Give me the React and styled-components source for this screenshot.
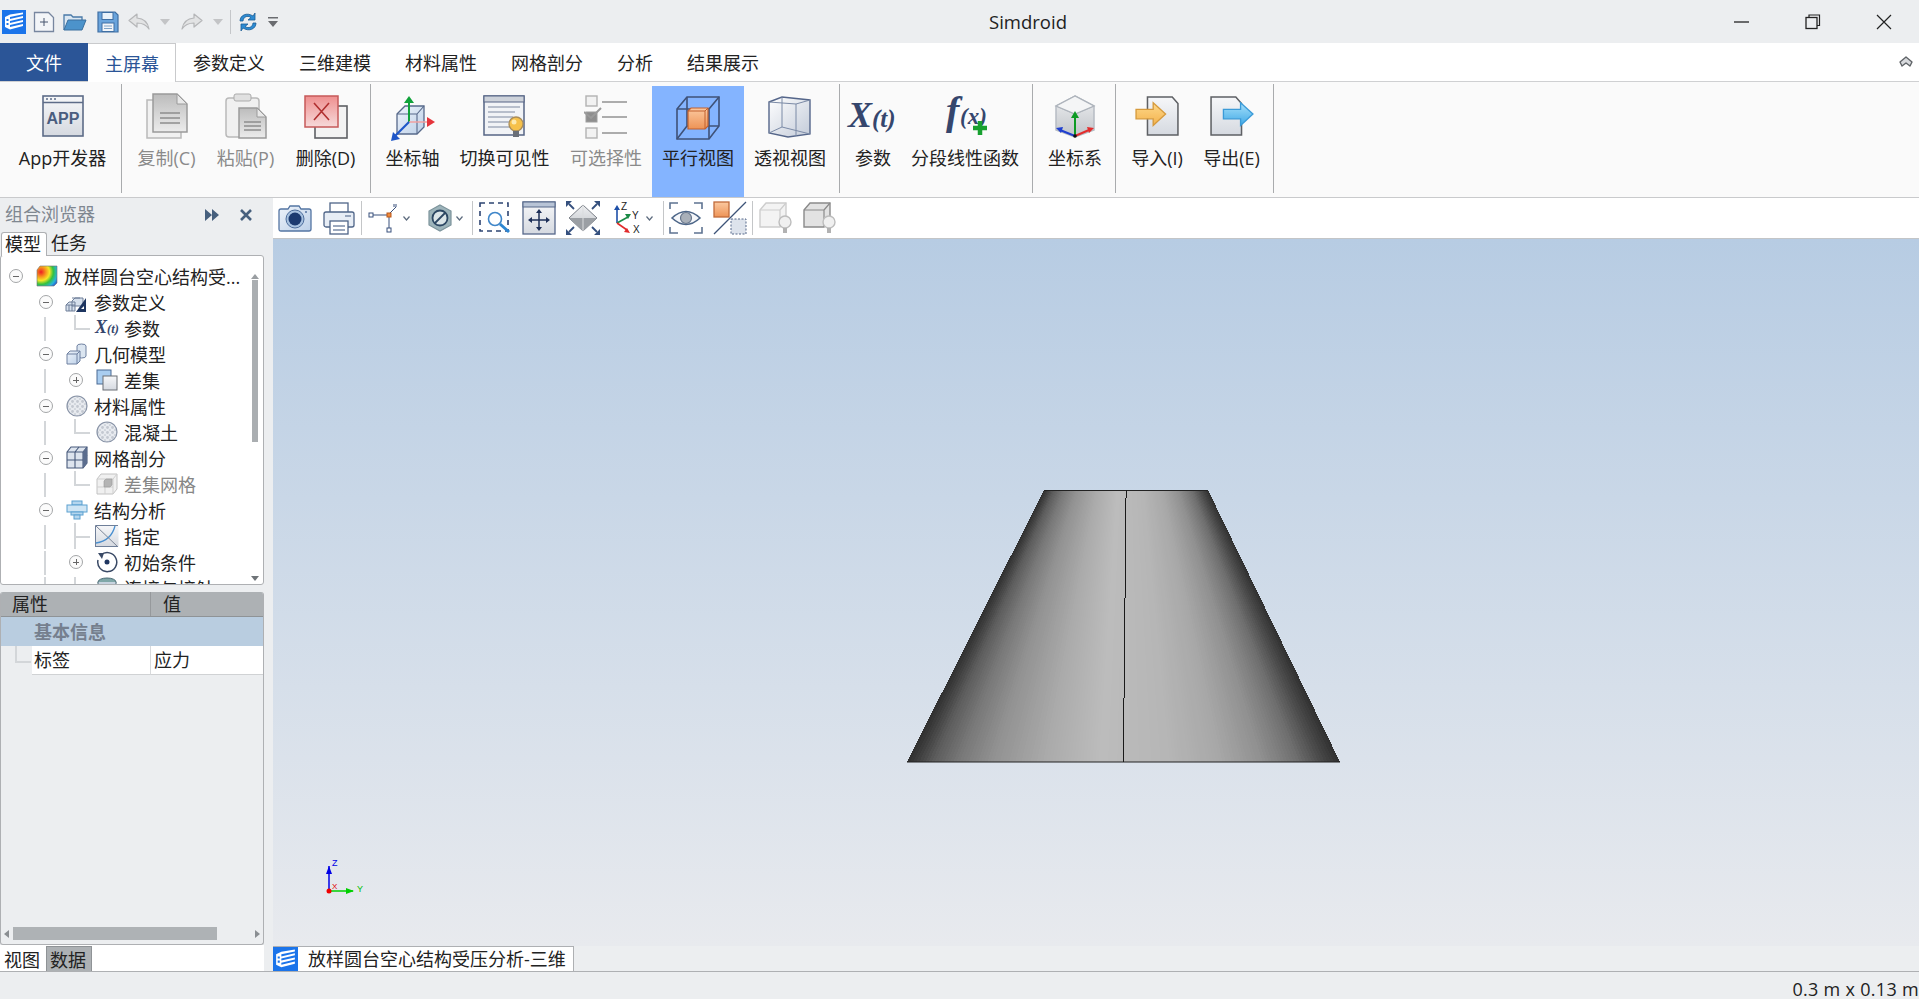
import React from 'react';
import styled, { createGlobalStyle, css } from 'styled-components';

const Global = createGlobalStyle`
  html, body { margin: 0; padding: 0; background: #eceef0; overflow: hidden; }
  * { box-sizing: border-box; }
  body { font-family: "Open Sans", "Noto Sans CJK SC", sans-serif; color: #222; }
`;

const Root = styled.div`
  width: 1919px; height: 999px; display: flex; flex-direction: column; overflow: hidden; background: #eceef0;
`;
const HiddenDefs = styled.svg`display: block; width: 0; height: 0;`;

/* title bar */
const TitleBar = styled.div`height: 43px; display: flex; align-items: center; background: #eceef0; flex: none;`;
const Qat = styled.div`display: flex; align-items: center; width: 280px; flex: none; padding-left: 2px;`;
const QatItem = styled.div`display: flex; margin-right: ${p => p.$mr || 0}px;`;
const QatSep = styled.div`width: 1px; height: 24px; background: #c4c6c9; margin-right: 7px;`;
const Title = styled.div`flex: 1; text-align: center; padding-left: 70px; font-size: 18.5px; line-height: 45px; color: #222;`;
const WinControls = styled.div`display: flex; flex: none;`;
const WinButton = styled.div`width: 71px; height: 43px; display: flex; align-items: center; justify-content: center;`;

/* menu */
const MenuBar = styled.div`height: 39px; flex: none; display: flex; background: #fff; border-bottom: 1px solid #cfd0d2;`;
const FileTab = styled.div`width: 88px; height: 38px; background: #2b5597; color: #fff; font-size: 18px; line-height: 40px; text-align: center;`;
const MenuTab = styled.div`
  height: ${p => p.$active ? 39 : 38}px; padding: 0 17px; font-size: 18px; line-height: 40px; white-space: nowrap; color: ${p => p.$active ? '#2b5597' : '#222'};
  ${p => p.$active && css`background: #fff; border: 1px solid #c9cacc; border-bottom: none; border-left: none; width: 88px; padding: 0 0 0 17px;`}
`;
const MenuSpacer = styled.div`flex: 1;`;
const Collapse = styled.div`width: 20px; display: flex; align-items: center; justify-content: flex-start;`;

/* ribbon */
const Ribbon = styled.div`height: 116px; flex: none; display: flex; padding-left: 2px; background: #fafafa; border-bottom: 1px solid #c9cacc;`;
const RibbonGroup = styled.div`
  display: flex; align-items: flex-start; height: 109px; margin-top: 2px; padding: 0 ${p => p.$pr || 3}px 0 5px; border-right: 1px solid #a9abad;
`;
const RibbonButton = styled.div`
  width: ${p => p.$w}px; height: 111px; margin-top: 2px; padding-top: 10px; display: flex; flex-direction: column; align-items: center; flex: none;
  background: ${p => p.$active ? '#84b4ff' : 'transparent'};
`;
const RibbonIcon = styled.div`height: 49px; display: flex; align-items: flex-start; justify-content: center;`;
const RibbonLabel = styled.div`
  font-size: 18px; line-height: 26px; white-space: nowrap; color: ${p => p.$disabled ? '#8a8a8a' : '#222'};
`;

/* main */
const Main = styled.div`flex: 1; display: flex; min-height: 0;`;
const LeftPanel = styled.div`width: 264px; flex: none; margin-right: 9px; display: flex; flex-direction: column;`;
const DockHeader = styled.div`height: 34px; flex: none; display: flex; align-items: center; padding-left: 5px; font-size: 18px; color: #7f8790;`;
const DockTitle = styled.div`flex: 1; line-height: 30px; margin-bottom: 2px;`;
const DockAction = styled.div`display: flex; margin-right: ${p => p.$mr}px;`;
const TabRow = styled.div`height: 23px; flex: none; display: flex; font-size: 18px; line-height: 23px; position: relative; z-index: 1;`;
const ModelTab = styled.div`
  height: ${p => p.$active ? 24 : 23}px; width: ${p => p.$active ? 46 : 42}px; padding-left: ${p => p.$active ? 3 : 4}px; margin-left: ${p => p.$active ? 1 : 0}px;
  ${p => p.$active && css`background: #fff; border: 1px solid #aeb0b3; border-bottom: none; border-radius: 3px 3px 0 0;`}
`;
const TreeBox = styled.div`height: 330px; flex: none; display: flex; background: #fff; border: 1px solid #aeb0b3; border-radius: 3px; overflow: hidden;`;
const TreeList = styled.div`flex: 1; padding-top: 7px; overflow: hidden; min-width: 0;`;
const Row = styled.div`display: flex; align-items: center; height: 26px; font-size: 18px; white-space: nowrap; color: ${p => p.$disabled ? '#868686' : '#222'};`;
const guide = '#d3d6d9';
const Cell = styled.div`
  width: 30px; height: 26px; flex: none; display: flex; align-items: center; justify-content: center; padding-right: 0;
  background-repeat: no-repeat;
  ${p => p.$kind === 'v' && css`
    background-image: linear-gradient(${guide}, ${guide});
    background-size: 2px 24px; background-position: 13px 2px;
  `}
  ${p => p.$kind === 'elbow' && css`
    background-image: linear-gradient(${guide}, ${guide}), linear-gradient(${guide}, ${guide});
    background-size: 2px 14px, 16px 2px; background-position: 13px 0, 13px 13px;
  `}
  ${p => p.$kind === 'tee' && css`
    background-image: linear-gradient(${guide}, ${guide}), linear-gradient(${guide}, ${guide});
    background-size: 2px 26px, 16px 2px; background-position: 13px 0, 13px 13px;
  `}
`;
const Toggle = styled.div`
  width: 14px; height: 14px; border-radius: 50%; border: 1px solid #a4a6a8; background-color: #fbfbfb; background-repeat: no-repeat;
  background-image: linear-gradient(#666, #666) ${p => p.$plus ? ', linear-gradient(#666, #666)' : ''};
  background-size: 6px 1px ${p => p.$plus ? ', 1px 6px' : ''};
  background-position: center ${p => p.$plus ? ', center' : ''};
`;
const NodeIcon = styled.div`width: 24px; height: 24px; flex: none; margin: 0 5px 0 4px; display: flex; align-items: center; justify-content: center;`;
const TreeScroll = styled.div`width: 11px; margin-right: 3px; flex: none; display: flex; flex-direction: column; align-items: center; padding: 18px 0 3px;`;
const ArrowUp = styled.div`width: 0; height: 0; border-left: 4px solid transparent; border-right: 4px solid transparent; border-bottom: 5px solid #9a9ea2;`;
const ArrowDown = styled.div`width: 0; height: 0; border-left: 4px solid transparent; border-right: 4px solid transparent; border-top: 5px solid #6f7478; margin-top: auto;`;
const VThumb = styled.div`width: 6px; height: 162px; background: #aaaeb1; margin-top: 1px;`;

const PropPanel = styled.div`
  height: 353px; margin-top: 7px; flex: none; display: flex; flex-direction: column; background: #eceef0;
  border: 1px solid #aeb0b3; border-top: none; border-radius: 3px; overflow: hidden;
`;
const PropHead = styled.div`height: 25px; flex: none; display: flex; background: #adb1b4; border-bottom: 1px solid #8f9396; font-size: 18px; line-height: 25px;`;
const PropHeadCell = styled.div`padding-left: ${p => p.$pl}px; width: ${p => p.$w ? p.$w + 'px' : 'auto'}; flex: ${p => p.$w ? 'none' : 1}; ${p => p.$w && 'border-right: 1px solid #96999c;'}`;
const PropSection = styled.div`height: 29px; flex: none; background: #b9cde0; padding-left: 33px; font-size: 18px; font-weight: 700; line-height: 31px; color: #757f8e;`;
const PropRow = styled.div`height: 29px; flex: none; display: flex; font-size: 18px; line-height: 29px;`;
const PropGutter = styled.div`
  width: 31px; flex: none; background: no-repeat linear-gradient(${guide}, ${guide}) 14px 0 / 2px 15px, no-repeat linear-gradient(${guide}, ${guide}) 14px 15px / 16px 2px;
`;
const PropLabel = styled.div`width: 119px; flex: none; background: #fff; padding-left: 2px; border-bottom: 1px solid #d0d2d4; border-right: 1px solid #d8dadc;`;
const PropValue = styled.div`flex: 1; background: #fff; padding-left: 3px; border-bottom: 1px solid #d0d2d4;`;
const PropFill = styled.div`flex: 1;`;
const HScroll = styled.div`height: 13px; margin-bottom: 4px; flex: none; display: flex; align-items: center; padding: 0 3px;`;
const ArrowLeft = styled.div`width: 0; height: 0; border-top: 4px solid transparent; border-bottom: 4px solid transparent; border-right: 5px solid #8a8e92;`;
const ArrowRight = styled.div`width: 0; height: 0; border-top: 4px solid transparent; border-bottom: 4px solid transparent; border-left: 5px solid #8a8e92; margin-left: auto;`;
const HThumb = styled.div`width: 204px; height: 13px; background: #aeb2b5; margin-left: 4px;`;
const BottomTabs = styled.div`flex: 1; display: flex; align-items: flex-end; background: #fff; font-size: 18px;`;
const BottomTab = styled.div`
  width: 46px; height: 25px; line-height: 23px; padding: 3px 0 0 4px;
  ${p => p.$active && css`background: #adb1b4; border: 1px solid #8f9396; border-bottom: none; padding: 2px 0 0 3px;`}
`;

const RightPane = styled.div`flex: 1; min-width: 0; display: flex; flex-direction: column;`;
const Toolbar = styled.div`height: 41px; flex: none; display: flex; align-items: center; background: #fff; border-bottom: 1px solid #c3c5c7;`;
const ToolBtn = styled.div`width: 44px; height: 40px; flex: none; display: flex; align-items: center; justify-content: center;`;
const DropBtn = styled.div`height: 40px; flex: none; display: flex; align-items: center; padding: 0 ${p => p.$pr}px 0 ${p => p.$pl}px; gap: ${p => p.$gap}px;`;
const ToolSep = styled.div`width: 1px; height: 34px; background: #c4c6c8; flex: none;`;
const Viewport = styled.div`flex: 1; position: relative; background: linear-gradient(#b7cce3, #e8eaee); min-height: 0;`;
const Model = styled.svg`position: absolute; left: 634px; top: 251px;`;
const Triad = styled.svg`position: absolute; left: 40px; top: 615px;`;
const DocTabs = styled.div`height: 25px; flex: none; display: flex; background: #eceef0;`;
const DocTab = styled.div`
  width: 301px; display: flex; align-items: center; background: #fff; border: 1px solid #aeb0b3; border-bottom: none; border-left: none; font-size: 18px; white-space: nowrap;
`;
const DocLabel = styled.div`margin-left: 10px; line-height: 26px;`;
const StatusBar = styled.div`height: 28px; flex: none; display: flex; justify-content: flex-end; background: #eceef0; border-top: 1px solid #aeb0b3; font-size: 18px; letter-spacing: .3px; line-height: 35px; color: #222; white-space: nowrap;`;

/* ---------- drawings ---------- */
const Logo = ({ s = 24 }) => (
  <svg width={s} height={s} viewBox="0 0 24 24">
    <rect width="24" height="24" fill="#1b74ea" />
    <path d="M3 7l5-2.5 13-2v1.800L8 7v2l13-3v2L8 11v2l13-3v2L8 15v2l13-3v2L8 19.500 3 17z" fill="#fff" />
    <path d="M4.500 9h2v2h-2zM4.500 13h2v2h-2z" fill="#1b74ea" />
  </svg>
);
const NewIco = () => (
  <svg width="22" height="22" viewBox="0 0 22 22">
    <path d="M1.500 1.500h14l5 5v14h-19z" fill="#f3f5f8" stroke="#77869f" strokeWidth="1.300" />
    <path d="M11 7v8M7 11h8" stroke="#46546e" strokeWidth="1" />
  </svg>
);
const OpenIco = () => (
  <svg width="24" height="20" viewBox="0 0 24 20">
    <path d="M1 18V3h7l2 2h9v3" fill="#dbe7f2" stroke="#4a7aa8" strokeWidth="1.300" />
    <path d="M1 18l4-10h18l-4 10z" fill="#4c93cb" stroke="#3a6f9e" strokeWidth="1" />
  </svg>
);
const SaveIco = () => (
  <svg width="22" height="22" viewBox="0 0 22 22">
    <path d="M1 1h17l3 3v17H1z" fill="#6aa4dc" stroke="#3f6fa3" strokeWidth="1.200" />
    <rect x="5" y="1.500" width="11" height="7" fill="#eaf2fa" stroke="#3f6fa3" />
    <rect x="5" y="12" width="12" height="8.500" fill="#f2f5f9" stroke="#3f6fa3" />
    <path d="M7 15h8M7 17.500h8" stroke="#7ea2c6" />
  </svg>
);
const UndoIco = ({ flip }) => (
  <svg width="23" height="18" viewBox="0 0 23 18" style={flip ? { transform: 'scaleX(-1)' } : undefined}>
    <path d="M9 1L1 7.500 9 14v-4c5 0 9 1.500 12 6-1-6-5-10.500-12-11z" fill="#e2e3e4" stroke="#b5b6b8" strokeWidth="1.200" strokeLinejoin="round" />
  </svg>
);
const TinyDown = () => (
  <svg width="10" height="6" viewBox="0 0 10 6"><path d="M0 0h10L5 6z" fill="#c3c4c6" /></svg>
);
const RefreshIco = () => (
  <svg width="20" height="22" viewBox="0 0 20 22">
    <path d="M2 10C2 4 9 1 15 5l2-3v7h-7l3-2.500C9 4 5.500 6 5 10z" fill="#2d8bd2" stroke="#1c5d94" strokeWidth=".8" />
    <path d="M18 12c0 6-7 9-13 5l-2 3v-7h7l-3 2.500c4 2.500 7.500.5 8-3.500z" fill="#2d8bd2" stroke="#1c5d94" strokeWidth=".8" />
  </svg>
);
const QatMore = () => (
  <svg width="10" height="10" viewBox="0 0 10 10"><path d="M0 0h10v1.500H0zM0 4h10L5 10z" fill="#6a6c70" /></svg>
);

const DocPath = ({ x, y, w, h, f = 8 }) => `M${x} ${y}h${w - f}l${f} ${f}v${h - f}h-${w}z`;

const AppIco = () => (
  <svg width="42" height="42" viewBox="0 0 42 42" style={{ marginTop: -1 }}>
    <rect x="1" y="1" width="40" height="40" fill="url(#gPage)" stroke="#5d6c88" strokeWidth="1.600" />
    <path d="M1 7.500h40" stroke="#5d6c88" strokeWidth="1.300" />
    <path d="M4 4h2M8 4h2M12 4h2" stroke="#5d6c88" strokeWidth="1.300" />
    <text x="21" y="29" textAnchor="middle" fontFamily="Liberation Sans, sans-serif" fontWeight="700" fontSize="16" fill="#4a5d7f">APP</text>
  </svg>
);
const CopyIco = () => (
  <svg width="42" height="46" viewBox="0 0 42 46" style={{ marginTop: -3 }}>
    <rect x="1" y="7" width="34" height="38" fill="#f1f1f1" stroke="#b9b9b9" strokeWidth="1.500" />
    <path d={DocPath({ x: 7, y: 1, w: 34, h: 38, f: 10 })} fill="url(#gGray)" stroke="#9a9a9a" strokeWidth="1.500" />
    <path d="M31 1v10h10z" fill="#e8e8e8" stroke="#9a9a9a" />
    <path d="M14 20h20M14 25h20M14 30h20" stroke="#8d8d8d" strokeWidth="1.500" />
  </svg>
);
const PasteIco = () => (
  <svg width="42" height="46" viewBox="0 0 42 46" style={{ marginTop: -3 }}>
    <rect x="1" y="5" width="33" height="39" rx="3" fill="#f0f0f0" stroke="#b9b9b9" strokeWidth="1.500" />
    <rect x="9" y="1" width="17" height="7" rx="2" fill="#e0e0e0" stroke="#ababab" />
    <path d={DocPath({ x: 14, y: 15, w: 27, h: 30, f: 9 })} fill="url(#gGray)" stroke="#9a9a9a" strokeWidth="1.500" />
    <path d="M32 15v9h9z" fill="#e8e8e8" stroke="#9a9a9a" />
    <path d="M19 29h17M19 33h17M19 37h17" stroke="#8d8d8d" strokeWidth="1.400" />
  </svg>
);
const DeleteIco = () => (
  <svg width="44" height="44" viewBox="0 0 44 44" style={{ marginTop: -1 }}>
    <rect x="11" y="11" width="32" height="32" fill="#f3f3f3" stroke="#5e6064" strokeWidth="1.600" />
    <rect x="1" y="1" width="33" height="31" fill="url(#gRed)" stroke="#c65a5a" strokeWidth="1.500" />
    <path d="M10 8l15 17M25 8L10 25" stroke="#b02f2f" strokeWidth="1.600" />
  </svg>
);
const AxisIco = () => (
  <svg width="46" height="48" viewBox="0 0 46 48" style={{ marginTop: -2 }}>
    <path d="M7 20l8-8h19v21l-7 7H7z" fill="url(#gBlueLight)" stroke="#57698a" strokeWidth="1.300" />
    <path d="M7 20h20v20M27 20l7-8" fill="none" stroke="#57698a" strokeWidth="1.100" />
    <path d="M19 28V6" stroke="#10a23a" strokeWidth="2" />
    <path d="M14 9l5-7 5 7z" fill="#10a23a" />
    <path d="M19 28h20" stroke="#f0a0a0" strokeWidth="1.500" />
    <path d="M37 23l8 5-8 5z" fill="#e5343b" />
    <path d="M19 28L5 42" stroke="#1f57c8" strokeWidth="2.200" />
    <path d="M1 47l2-9 7 7z" fill="#1f57c8" />
  </svg>
);
const VisIco = () => (
  <svg width="44" height="44" viewBox="0 0 44 44" style={{ marginTop: -1 }}>
    <rect x="1" y="1" width="40" height="39" fill="#f1f3f6" stroke="#566585" strokeWidth="1.500" />
    <rect x="1" y="1" width="40" height="6" fill="#cdd2da" stroke="#566585" strokeWidth="1" />
    <path d="M5 12h32M5 17h27M5 22h25M5 27h22M5 32h22" stroke="#7f8aa0" strokeWidth="1.200" />
    <circle cx="33" cy="29" r="7" fill="#f6c14a" stroke="#a88c5a" strokeWidth="1.300" />
    <circle cx="31" cy="27" r="2.500" fill="#fdeab0" />
    <rect x="30" y="36" width="6" height="6" fill="#6a6f78" />
  </svg>
);
const SelectIco = () => (
  <svg width="44" height="44" viewBox="0 0 44 44" style={{ marginTop: -1 }}>
    <rect x="2" y="1" width="11" height="10" fill="#f2f2f2" stroke="#b2b2b2" strokeWidth="1.400" />
    <rect x="2" y="17" width="11" height="10" fill="#8e8e8e" stroke="#9e9e9e" />
    <path d="M0 17l7 6 10-10" fill="none" stroke="#9a9a9a" strokeWidth="2" />
    <rect x="2" y="33" width="11" height="10" fill="#f2f2f2" stroke="#b2b2b2" strokeWidth="1.400" />
    <path d="M18 7h25M18 22h25M18 38h25" stroke="#acacac" strokeWidth="1.800" />
  </svg>
);
const ParallelIco = () => (
  <svg width="44" height="46" viewBox="0 0 44 46" style={{ marginTop: -2 }}>
    <g fill="none" stroke="#3f5278" strokeWidth="1.600">
      <path d="M1 15L11 3h32v29L33 45H1z" />
      <path d="M1 15h32v30M33 15L43 3M11 3v29h32M11 32L1 45" />
    </g>
    <path d="M12 17l3-3h17v18l-3 3H12z" fill="url(#gOrange)" stroke="#c2602e" strokeWidth="1.200" />
    <path d="M12 17h17v18M29 17l3-3" fill="none" stroke="#c2602e" />
  </svg>
);
const PerspIco = () => (
  <svg width="44" height="44" viewBox="0 0 44 44" style={{ marginTop: -1 }}>
    <path d="M1 7l13-5 28 3v34l-22 3-19-4z" fill="url(#gGlass)" stroke="#55668a" strokeWidth="1.400" />
    <path d="M1 7l27 2 14-4M28 9v32M14 2v30L1 38M14 32l28 7" fill="none" stroke="#7b8aa6" strokeWidth="1" />
  </svg>
);
const XtIco = ({ s = 1 }) => (
  <svg width={50 * s} height={36 * s} viewBox="0 0 50 36" overflow="visible" style={s === 1 ? { marginTop: 4 } : undefined}>
    <text y="27" fontFamily="Liberation Serif, serif" fontStyle="italic" fontWeight="700" fill="#35466d">
      <tspan x="0" fontSize="36">X</tspan><tspan fontSize="25">(t)</tspan>
    </text>
  </svg>
);
const FxIco = () => (
  <svg width="50" height="44" viewBox="0 0 50 44" overflow="visible" style={{ marginTop: -2 }}>
    <text y="30" fontFamily="Liberation Serif, serif" fontStyle="italic" fontWeight="700" fill="#35466d">
      <tspan x="6" fontSize="40">f</tspan><tspan x="20" fontSize="23">(x)</tspan>
    </text>
    <path d="M40 27v14M33 34h14" stroke="#17a02f" strokeWidth="4.500" />
  </svg>
);
const CoordIco = () => (
  <svg width="42" height="44" viewBox="0 0 42 44" style={{ marginTop: -1 }}>
    <path d="M21 1l19 10v24L21 42 2 35V11z" fill="url(#gGray2)" stroke="#b6bcc3" strokeWidth="1.500" />
    <path d="M2 11l19 8 19-8" fill="#eef0f2" stroke="#b6bcc3" strokeWidth="1.200" />
    <path d="M2 11l19-10 19 10-19 8z" fill="#f4f5f6" stroke="#adb3bb" strokeWidth="1.300" />
    <path d="M21 41V22" stroke="#0d9b24" strokeWidth="2" />
    <path d="M17 23l4-7 4 7z" fill="#0d9b24" />
    <path d="M21 41L6 35" stroke="#1f3fd0" strokeWidth="2" />
    <path d="M2 33l7-1-2 6z" fill="#1f3fd0" />
    <path d="M21 41l14-6" stroke="#e32c2c" strokeWidth="2" />
    <path d="M40 33l-7-1 2 6z" fill="#e32c2c" />
    <circle cx="21" cy="41" r="1.800" fill="#111" />
  </svg>
);
const ImportIco = () => (
  <svg width="46" height="40" viewBox="0 0 46 42">
    <path d="M13 1h26l6 7v33H13z" fill="url(#gPage)" stroke="#5e6064" strokeWidth="1.600" />
    <path d="M1 14h18V7l13 12-13 12v-7H1z" fill="url(#gOrange2)" stroke="#d69a3c" strokeWidth="1.400" />
  </svg>
);
const ExportIco = () => (
  <svg width="46" height="40" viewBox="0 0 46 42">
    <path d="M1 1h26l6 7v33H1z" fill="url(#gPage)" stroke="#5e6064" strokeWidth="1.600" />
    <path d="M14 14h18V7l13 12-13 12v-7H14z" fill="url(#gSky)" stroke="#3b9bd8" strokeWidth="1.400" />
  </svg>
);

/* toolbar */
const CameraIco = () => (
  <svg width="34" height="28" viewBox="0 0 34 28">
    <path d="M1 7q0-2 2-2h7l2-3h9l2 3h8q2 0 2 2v18q0 2-2 2H3q-2 0-2-2z" fill="url(#gBlueLight)" stroke="#5475a3" strokeWidth="1.300" />
    <circle cx="17" cy="15" r="9" fill="#a8c2e0" stroke="#4d6d9c" />
    <circle cx="17" cy="15" r="6.500" fill="#1c3a70" />
    <circle cx="28" cy="8" r="1" fill="#5475a3" />
  </svg>
);
const PrinterIco = () => (
  <svg width="32" height="33" viewBox="0 0 32 33">
    <rect x="7" y="1" width="18" height="12" fill="#fff" stroke="#4f6588" strokeWidth="1.300" />
    <rect x="1" y="10" width="30" height="15" rx="2" fill="#e7edf5" stroke="#4f6588" strokeWidth="1.300" />
    <rect x="7" y="19" width="18" height="13" fill="#fff" stroke="#4f6588" strokeWidth="1.300" />
    <path d="M10 24h12M10 28h12" stroke="#7b8ca8" strokeWidth="1.300" />
    <path d="M22 14h6" stroke="#7b8ca8" strokeWidth="1.500" />
  </svg>
);
const PointIco = () => (
  <svg width="29" height="30" viewBox="0 0 29 30">
    <path d="M4 12h17M21 12v15M22 10l6-6" stroke="#39507c" strokeWidth="1" fill="none" />
    <rect x="1" y="10" width="4" height="4" fill="#fff" stroke="#39507c" />
    <rect x="19" y="10" width="4" height="4" fill="#f08a3a" stroke="#b8561b" />
    <rect x="19" y="25" width="4" height="4" fill="#fff" stroke="#39507c" />
    <path d="M26 1v3M28 1v3" stroke="#39507c" />
  </svg>
);
const HexIco = () => (
  <svg width="30" height="28" viewBox="0 0 30 28">
    <path d="M15 1l11 6v14l-11 6-11-6V7z" fill="#9db4bb" stroke="#7d949c" strokeWidth="1.200" />
    <circle cx="15" cy="14" r="7.500" fill="#dbe5e8" stroke="#2c4763" strokeWidth="1.800" />
    <path d="M10 19L20 9" stroke="#2c4763" strokeWidth="1.800" />
  </svg>
);
const Chevron = () => (
  <svg width="7" height="5" viewBox="0 0 7 5"><path d="M.5.500L3.500 4l3-3.500" fill="none" stroke="#5d6b7e" strokeWidth="1.200" /></svg>
);
const ZoomRectIco = () => (
  <svg width="32" height="32" viewBox="0 0 32 32">
    <rect x="1" y="1" width="28" height="28" fill="none" stroke="#2d4472" strokeWidth="1.600" strokeDasharray="5 4" />
    <circle cx="16" cy="17" r="6.500" fill="#fff" stroke="#3f86c9" strokeWidth="1.600" />
    <path d="M21 22l9 8" stroke="#2c86d2" strokeWidth="3" />
  </svg>
);
const PanIco = () => (
  <svg width="34" height="34" viewBox="0 0 34 34">
    <rect x="1" y="1" width="32" height="32" fill="url(#gPage)" stroke="#56688a" strokeWidth="1.300" />
    <rect x="1" y="1" width="32" height="5" fill="#b8c4d6" stroke="#56688a" />
    <path d="M17 10v18M8 19h18" stroke="#1d2f58" strokeWidth="1.500" />
    <path d="M17 8l-3 4h6zM17 30l-3-4h6zM6 19l4-3v6zM28 19l-4-3v6z" fill="#1d2f58" />
  </svg>
);
const FitIco = () => (
  <svg width="36" height="36" viewBox="0 0 36 36">
    <path d="M18 5l14 13-14 13L4 18z" fill="url(#gGray2)" stroke="#7b8088" strokeWidth="1" />
    <path d="M4 18h28L18 31z" fill="#9b9fa4" />
    <path d="M18 5v26" stroke="#d9dbdd" />
    <g stroke="#35507e" strokeWidth="1.800">
      <path d="M9 9L4 4M27 9l5-5M9 27l-5 5M27 27l5 5" />
    </g>
    <path d="M1 1h6L1 7zM35 1h-6l6 6zM1 35h6l-6-6zM35 35h-6l6-6z" fill="#35507e" />
  </svg>
);
const AxesIco = () => (
  <svg width="28" height="34" viewBox="0 0 28 34">
    <path d="M5 22V8" stroke="#1d4fa8" strokeWidth="1.600" />
    <path d="M2 9l3-5 3 5z" fill="#1d4fa8" />
    <path d="M5 22l11-6" stroke="#1a8a46" strokeWidth="1.600" />
    <path d="M19 13l-6 0 3 5z" fill="#1a8a46" />
    <path d="M5 22l10 7" stroke="#e12b2b" strokeWidth="1.600" />
    <path d="M18 32l-6-1 3-4z" fill="#e12b2b" />
    <text x="9" y="9" fontSize="10" fontFamily="Liberation Sans, sans-serif" fill="#222">Z</text>
    <text x="20" y="18" fontSize="10" fontFamily="Liberation Sans, sans-serif" fill="#222">Y</text>
    <text x="21" y="32" fontSize="10" fontFamily="Liberation Sans, sans-serif" fill="#222">X</text>
  </svg>
);
const EyeIco = () => (
  <svg width="34" height="32" viewBox="0 0 34 32">
    <path d="M1 7V1h8M25 1h8v6M1 25v6h8M25 31h8v-6" fill="none" stroke="#5e7391" strokeWidth="1.600" />
    <path d="M3 16q14-13 28 0-14 13-28 0z" fill="#f5f7fa" stroke="#4d6688" strokeWidth="1.600" />
    <circle cx="17" cy="16" r="5.500" fill="#a9b0b9" stroke="#67768c" strokeWidth="1.200" />
  </svg>
);
const SlashIco = () => (
  <svg width="34" height="34" viewBox="0 0 34 34">
    <rect x="1" y="1" width="15" height="15" fill="url(#gOrange)" stroke="#c06a3a" strokeWidth="1.300" />
    <rect x="18" y="18" width="15" height="15" fill="#dde3ec" stroke="#56688a" strokeDasharray="2 1.500" />
    <path d="M1 33L33 1" stroke="#3d5378" strokeWidth="1.300" />
  </svg>
);
const BoxBulbIco = ({ dark }) => (
  <svg width="33" height="34" viewBox="0 0 33 34">
    <path d="M1 9l6-7h20v18l-6 6H1z" fill={dark ? '#e2e2e2' : '#f3f3f3'} stroke={dark ? '#8a8a8a' : '#cdcdcd'} strokeWidth="1.400" />
    <path d="M1 9h20v17M21 9l6-7" fill="none" stroke={dark ? '#8a8a8a' : '#cdcdcd'} strokeWidth="1.200" />
    <circle cx="26" cy="21" r="6" fill="#f0f0f0" stroke="#bdbdbd" strokeWidth="1.400" />
    <path d="M24 27h4v5h-4z" fill="#b2b2b2" />
  </svg>
);

/* tree */
const RootIco = () => (
  <svg width="22" height="22" viewBox="0 0 22 22">
    <path d="M1 5l3-4h17v17l-3 3H1z" fill="url(#gHeat)" stroke="#707070" strokeWidth=".6" />
  </svg>
);
const ParamIco = () => (
  <svg width="24" height="22" viewBox="0 0 24 22">
    <path d="M7 10l3-3h8v8H7z M1 20v-6l3-3h6v9z" fill="#d6e0ec" stroke="#6f7f99" />
    <path d="M1 14h9M4 14v6M7 14v6M7 7h8" stroke="#6f7f99" fill="none" />
    <path d="M21 7v14H11z" fill="#1d3560" />
    <path d="M19 15v3h-3z" fill="#fff" />
  </svg>
);
const GeomIco = () => (
  <svg width="22" height="22" viewBox="0 0 22 22">
    <path d="M11 3q0-2 4.500-2t4.500 2v10q0 2-4.500 2t-4.500-2z" fill="#dbe5f0" stroke="#6e80a0" />
    <path d="M1 11l3-3h10v10l-3 3H1z" fill="url(#gBlueLight)" stroke="#6e80a0" />
    <path d="M1 11h10v10M11 11l3-3" fill="none" stroke="#6e80a0" />
  </svg>
);
const DiffIco = () => (
  <svg width="22" height="22" viewBox="0 0 22 22">
    <rect x="1" y="1" width="14" height="14" fill="#a9cdf0" stroke="#4b6a94" />
    <rect x="7" y="7" width="14" height="14" fill="url(#gPage)" stroke="#6a6e75" />
  </svg>
);
const MatIco = () => (
  <svg width="22" height="22" viewBox="0 0 22 22">
    <circle cx="11" cy="11" r="10" fill="url(#gDots)" stroke="#8a95a8" strokeWidth="1.200" />
  </svg>
);
const MeshIco = () => (
  <svg width="22" height="24" viewBox="0 0 22 24">
    <path d="M1 6l4-5h16v16l-4 5H1z" fill="#dde4ee" stroke="#46587a" strokeWidth="1.100" />
    <path d="M1 6h16v16M17 6l4-5M9 6v16M1 14h16M13 1L9 6M21 9l-4 5" fill="none" stroke="#46587a" strokeWidth="1.100" />
    <path d="M17 6l4-5v16l-4 5z" fill="#5b6d8e" />
  </svg>
);
const DiffMeshIco = () => (
  <svg width="22" height="22" viewBox="0 0 22 22">
    <path d="M1 6l4-5h16v15l-4 5H1z" fill="#f0f0f0" stroke="#c2c2c2" />
    <path d="M1 6h16v15M17 6l4-5M1 14h16M9 6v15" fill="none" stroke="#cfcfcf" />
    <path d="M8 8l2-2h6v6l-2 2H8z" fill="#b4b4b4" stroke="#999" strokeWidth=".6" />
  </svg>
);
const StructIco = () => (
  <svg width="22" height="20" viewBox="0 0 22 20">
    <rect x="6" y="1" width="10" height="4" fill="#b5d6ee" stroke="#5ba0d0" />
    <rect x="1" y="5" width="20" height="7" fill="#cfe5f4" stroke="#5ba0d0" />
    <rect x="5" y="12" width="12" height="3" fill="#b5d6ee" stroke="#5ba0d0" />
    <rect x="8" y="15" width="6" height="4" fill="#b5d6ee" stroke="#5ba0d0" />
  </svg>
);
const AssignIco = () => (
  <svg width="24" height="22" viewBox="0 0 24 22">
    <rect x=".5" y=".5" width="23" height="21" fill="url(#gPage)" />
    <path d="M.5 22V.5M.5 21.500H23M.5 .5H23" stroke="#6f7f99" />
    <path d="M1 18Q16 16 20 1" fill="none" stroke="#4a90d0" strokeWidth="1.300" />
    <path d="M1 1l21 20" stroke="#7b8596" strokeWidth="1" />
  </svg>
);
const InitIco = () => (
  <svg width="22" height="22" viewBox="0 0 22 22">
    <path d="M5 4A9.500 9.500 0 1 1 2 9" fill="none" stroke="#3a4a66" strokeWidth="1.500" />
    <path d="M2 2h6l-2 6z" fill="#3a4a66" />
    <circle cx="11" cy="11" r="2.500" fill="#1f3560" />
  </svg>
);
const ContactIco = () => (
  <svg width="22" height="22" viewBox="0 0 22 22">
    <ellipse cx="11" cy="5" rx="9" ry="4" fill="#7fa7a8" stroke="#4b6a75" />
    <path d="M2 5v12q9 6 18 0V5" fill="#c7d3df" stroke="#4b6a75" />
  </svg>
);

const tree = [
  { cells: ['minus'], icon: <RootIco />, label: '放样圆台空心结构受...' },
  { cells: ['', 'minus'], icon: <ParamIco />, label: '参数定义' },
  { cells: ['', 'v', 'elbow'], icon: <XtIco s={0.5} />, label: '参数' },
  { cells: ['', 'minus'], icon: <GeomIco />, label: '几何模型' },
  { cells: ['', 'v', 'plus'], icon: <DiffIco />, label: '差集' },
  { cells: ['', 'minus'], icon: <MatIco />, label: '材料属性' },
  { cells: ['', 'v', 'elbow'], icon: <MatIco />, label: '混凝土' },
  { cells: ['', 'minus'], icon: <MeshIco />, label: '网格剖分' },
  { cells: ['', 'v', 'elbow'], icon: <DiffMeshIco />, label: '差集网格', disabled: true },
  { cells: ['', 'minus'], icon: <StructIco />, label: '结构分析' },
  { cells: ['', 'v', 'tee'], icon: <AssignIco />, label: '指定' },
  { cells: ['', 'v', 'plus'], icon: <InitIco />, label: '初始条件' },
  { cells: ['', 'v', 'v'], icon: <ContactIco />, label: '连接与接触' },
];

const ribbon = [
  { buttons: [{ label: 'App开发器', w: 111, icon: <AppIco /> }] },
  {
    pr: 4,
    buttons: [
      { label: '复制(C)', w: 79, icon: <CopyIco />, disabled: true },
      { label: '粘贴(P)', w: 79, icon: <PasteIco />, disabled: true },
      { label: '删除(D)', w: 81, icon: <DeleteIco /> },
    ],
  },
  {
    buttons: [
      { label: '坐标轴', w: 73, icon: <AxisIco /> },
      { label: '切换可见性', w: 111, icon: <VisIco /> },
      { label: '可选择性', w: 92, icon: <SelectIco />, disabled: true },
      { label: '平行视图', w: 92, icon: <ParallelIco />, active: true },
      { label: '透视视图', w: 92, icon: <PerspIco /> },
    ],
  },
  {
    buttons: [
      { label: '参数', w: 56, icon: <XtIco /> },
      { label: '分段线性函数', w: 128, icon: <FxIco /> },
    ],
  },
  { buttons: [{ label: '坐标系', w: 74, icon: <CoordIco /> }] },
  {
    buttons: [
      { label: '导入(I)', w: 72, icon: <ImportIco /> },
      { label: '导出(E)', w: 77, icon: <ExportIco /> },
    ],
  },
];

const menus = ['参数定义', '三维建模', '材料属性', '网格剖分', '分析', '结果展示'];

/* shaded frustum, cut into narrow strips so the shading follows the slanted sides */
const stops = [[0, 48], [.02, 60], [.06, 92], [.12, 120], [.2, 146], [.32, 170], [.45, 188], [.6, 182], [.72, 168], [.82, 144], [.9, 112], [.96, 72], [1, 48]];
const shade = t => {
  for (let i = 1; i < stops.length; i++) {
    if (t <= stops[i][0]) {
      const [a, va] = stops[i - 1];
      const [b, vb] = stops[i];
      return Math.round(va + (vb - va) * (t - a) / (b - a));
    }
  }
  return 48;
};
const STRIPS = 140;
const strips = Array.from({ length: STRIPS }, (_, i) => {
  const t0 = i / STRIPS, t1 = (i + 1.6) / STRIPS;
  const v = shade((i + .5) / STRIPS);
  return {
    key: i,
    points: `${137 + 164 * t0},0 ${137 + 164 * Math.min(t1, 1)},0 ${433 * Math.min(t1, 1)},272 ${433 * t0},272`,
    fill: `rgb(${v},${v},${v})`,
  };
});

const Frustum = () => (
  <Model width="433" height="273" viewBox="0 0 433 273">
    <g shapeRendering="crispEdges">
      {strips.map(s => <polygon key={s.key} points={s.points} fill={s.fill} />)}
    </g>
    <path d="M137 .5H301M0 272H433" stroke="#222" strokeWidth="1" />
    <path d="M219.500 0V8M218.500 8V108M217.500 108V208M216.500 208V272" stroke="#1a1a1a" strokeWidth="1" />
  </Model>
);

const Axes3D = () => (
  <Triad width="60" height="50" viewBox="0 0 60 50">
    <path d="M16 37V12" stroke="#0000e6" strokeWidth="1.500" />
    <path d="M13 20l3-8 3 8z" fill="#0000e6" />
    <path d="M16 37h24" stroke="#00d000" strokeWidth="1.500" />
    <path d="M33 34l8 3-8 3z" fill="#00d000" />
    <circle cx="16" cy="37" r="2.500" fill="#f00000" />
    <text x="19" y="12" fontSize="9" fontFamily="Liberation Sans, sans-serif" fill="#0000e6">Z</text>
    <text x="44" y="38" fontSize="9" fontFamily="Liberation Sans, sans-serif" fill="#00c000">Y</text>
    <text x="19" y="35" fontSize="8" fontFamily="Liberation Sans, sans-serif" fill="#e00000">X</text>
  </Triad>
);

const Gradients = () => (
  <HiddenDefs aria-hidden="true">
    <defs>
      <linearGradient id="gPage" x1="0" y1="0" x2="0" y2="1"><stop offset="0" stopColor="#f6f7f9" /><stop offset="1" stopColor="#d5d9e0" /></linearGradient>
      <linearGradient id="gGray" x1="0" y1="0" x2="0" y2="1"><stop offset="0" stopColor="#bcbcbc" /><stop offset="1" stopColor="#ececec" /></linearGradient>
      <linearGradient id="gGray2" x1="0" y1="0" x2="0" y2="1"><stop offset="0" stopColor="#eeeff1" /><stop offset="1" stopColor="#bfc3c8" /></linearGradient>
      <linearGradient id="gRed" x1="0" y1="0" x2="0" y2="1"><stop offset="0" stopColor="#ef8f8f" /><stop offset="1" stopColor="#f6dada" /></linearGradient>
      <linearGradient id="gBlueLight" x1="0" y1="0" x2="1" y2="1"><stop offset="0" stopColor="#eef3fa" /><stop offset="1" stopColor="#bcd0e8" /></linearGradient>
      <linearGradient id="gOrange" x1="0" y1="0" x2="0" y2="1"><stop offset="0" stopColor="#fbc9a0" /><stop offset="1" stopColor="#ee9356" /></linearGradient>
      <linearGradient id="gOrange2" x1="0" y1="0" x2="0" y2="1"><stop offset="0" stopColor="#fdd98c" /><stop offset="1" stopColor="#f4b24c" /></linearGradient>
      <linearGradient id="gSky" x1="0" y1="0" x2="0" y2="1"><stop offset="0" stopColor="#a8e0fa" /><stop offset="1" stopColor="#3fa9e6" /></linearGradient>
      <linearGradient id="gGlass" x1="0" y1="0" x2="1" y2="1"><stop offset="0" stopColor="#ffffff" /><stop offset="1" stopColor="#c3cbd9" /></linearGradient>
      <radialGradient id="gHeat" cx=".2" cy=".3" r=".95">
        <stop offset="0" stopColor="#ee1c25" /><stop offset=".25" stopColor="#f7931e" /><stop offset=".45" stopColor="#f5e626" />
        <stop offset=".65" stopColor="#35c13f" /><stop offset=".85" stopColor="#27b6d8" /><stop offset="1" stopColor="#2a5fd0" />
      </radialGradient>
      <pattern id="gDots" width="5" height="5" patternUnits="userSpaceOnUse">
        <rect width="5" height="5" fill="#e8ebf0" /><circle cx="1.500" cy="1.500" r="1.400" fill="#c3c8d1" /><circle cx="4" cy="4" r="1.100" fill="#cfd4db" />
      </pattern>
    </defs>
  </HiddenDefs>
);

export default function App() {
  return (
    <Root>
      <Global />
      <Gradients />
      <TitleBar>
        <Qat>
          <QatItem $mr={7}><Logo /></QatItem>
          <QatItem $mr={8}><NewIco /></QatItem>
          <QatItem $mr={10}><OpenIco /></QatItem>
          <QatItem $mr={9}><SaveIco /></QatItem>
          <QatItem $mr={9}><UndoIco /></QatItem>
          <QatItem $mr={10}><TinyDown /></QatItem>
          <QatItem $mr={10}><UndoIco flip /></QatItem>
          <QatItem $mr={7}><TinyDown /></QatItem>
          <QatSep />
          <QatItem $mr={10}><RefreshIco /></QatItem>
          <QatItem><QatMore /></QatItem>
        </Qat>
        <Title>Simdroid</Title>
        <WinControls>
          <WinButton><svg width="16" height="16" viewBox="0 0 16 16"><path d="M0 8h15" stroke="#222" strokeWidth="1.300" /></svg></WinButton>
          <WinButton><svg width="16" height="16" viewBox="0 0 16 16"><path d="M4 3V1h10.500v10.500H12" fill="none" stroke="#222" strokeWidth="1.200" /><rect x="1" y="3.500" width="11" height="11" fill="none" stroke="#222" strokeWidth="1.300" /></svg></WinButton>
          <WinButton><svg width="16" height="16" viewBox="0 0 16 16"><path d="M1 1l14 14M15 1L1 15" stroke="#222" strokeWidth="1.200" /></svg></WinButton>
        </WinControls>
      </TitleBar>

      <MenuBar>
        <FileTab>文件</FileTab>
        <MenuTab $active>主屏幕</MenuTab>
        {menus.map(m => <MenuTab key={m}>{m}</MenuTab>)}
        <MenuSpacer />
        <Collapse>
          <svg width="14" height="12" viewBox="0 0 14 12"><path d="M1 6l6-5 6 5-2 4-4-3-4 3z" fill="#d8dadd" stroke="#606468" strokeWidth="1.400" strokeLinejoin="round" /></svg>
        </Collapse>
      </MenuBar>

      <Ribbon>
        {ribbon.map((group, i) => (
          <RibbonGroup key={i} $pr={group.pr}>
            {group.buttons.map(b => (
              <RibbonButton key={b.label} $w={b.w} $active={b.active}>
                <RibbonIcon>{b.icon}</RibbonIcon>
                <RibbonLabel $disabled={b.disabled}>{b.label}</RibbonLabel>
              </RibbonButton>
            ))}
          </RibbonGroup>
        ))}
      </Ribbon>

      <Main>
        <LeftPanel>
          <DockHeader>
            <DockTitle>组合浏览器</DockTitle>
            <DockAction $mr={19}>
              <svg width="16" height="14" viewBox="0 0 16 14"><path d="M1 1l7 6-7 6zM8 1l7 6-7 6z" fill="#465f7d" /></svg>
            </DockAction>
            <DockAction $mr={11}>
              <svg width="14" height="14" viewBox="0 0 14 14"><path d="M2 2l10 10M12 2L2 12" stroke="#465f7d" strokeWidth="2.600" /></svg>
            </DockAction>
          </DockHeader>
          <TabRow>
            <ModelTab $active>模型</ModelTab>
            <ModelTab>任务</ModelTab>
          </TabRow>
          <TreeBox>
            <TreeList>
              {tree.map(n => (
                <Row key={n.label} $disabled={n.disabled}>
                  {n.cells.map((c, i) => (
                    <Cell key={i} $kind={c}>
                      {(c === 'minus' || c === 'plus') && <Toggle $plus={c === 'plus'} />}
                    </Cell>
                  ))}
                  <NodeIcon>{n.icon}</NodeIcon>
                  {n.label}
                </Row>
              ))}
            </TreeList>
            <TreeScroll>
              <ArrowUp />
              <VThumb />
              <ArrowDown />
            </TreeScroll>
          </TreeBox>
          <PropPanel>
            <PropHead>
              <PropHeadCell $w={150} $pl={11}>属性</PropHeadCell>
              <PropHeadCell $pl={12}>值</PropHeadCell>
            </PropHead>
            <PropSection>基本信息</PropSection>
            <PropRow>
              <PropGutter />
              <PropLabel>标签</PropLabel>
              <PropValue>应力</PropValue>
            </PropRow>
            <PropFill />
            <HScroll>
              <ArrowLeft />
              <HThumb />
              <ArrowRight />
            </HScroll>
          </PropPanel>
          <BottomTabs>
            <BottomTab>视图</BottomTab>
            <BottomTab $active>数据</BottomTab>
          </BottomTabs>
        </LeftPanel>

        <RightPane>
          <Toolbar>
            <ToolBtn><CameraIco /></ToolBtn>
            <ToolBtn><PrinterIco /></ToolBtn>
            <ToolSep />
            <DropBtn $pl={6} $pr={6} $gap={6}><PointIco /><Chevron /></DropBtn>
            <DropBtn $pl={9} $pr={9} $gap={1}><HexIco /><Chevron /></DropBtn>
            <ToolSep />
            <ToolBtn><ZoomRectIco /></ToolBtn>
            <ToolBtn><PanIco /></ToolBtn>
            <ToolBtn><FitIco /></ToolBtn>
            <DropBtn $pl={7} $pr={10} $gap={6}><AxesIco /><Chevron /></DropBtn>
            <ToolSep />
            <ToolBtn><EyeIco /></ToolBtn>
            <ToolBtn><SlashIco /></ToolBtn>
            <ToolSep />
            <ToolBtn><BoxBulbIco /></ToolBtn>
            <ToolBtn><BoxBulbIco dark /></ToolBtn>
          </Toolbar>
          <Viewport>
            <Frustum />
            <Axes3D />
          </Viewport>
          <DocTabs>
            <DocTab>
              <Logo s={25} />
              <DocLabel>放样圆台空心结构受压分析-三维</DocLabel>
            </DocTab>
          </DocTabs>
        </RightPane>
      </Main>

      <StatusBar>0.3 m x 0.13 m</StatusBar>
    </Root>
  );
}
